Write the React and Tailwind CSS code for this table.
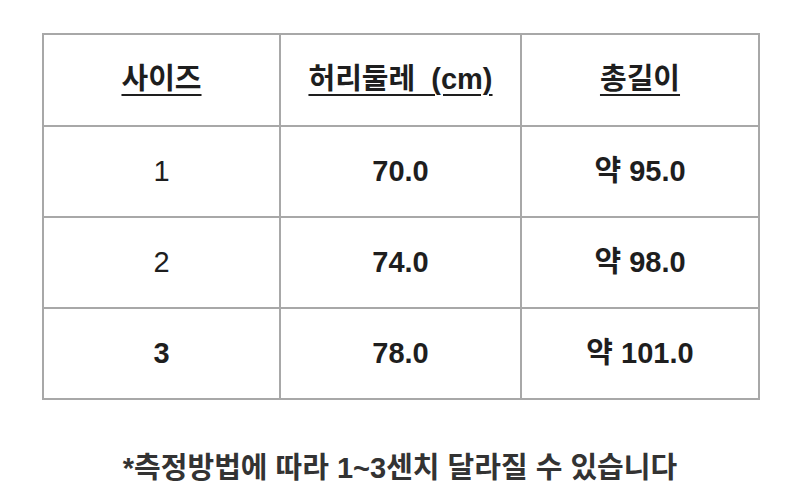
import React from 'react'

const rows = [
  { size: '1', waist: '70.0', length: '약 95.0', bold: false },
  { size: '2', waist: '74.0', length: '약 98.0', bold: false },
  { size: '3', waist: '78.0', length: '약 101.0', bold: true },
]

const font = { fontFamily: '"Liberation Sans", "Noto Sans CJK KR", sans-serif' }

const App = () => {
  return (
    <div className="w-[800px] h-[501px] bg-white text-[#1e1e1e] overflow-hidden" style={font}>
      <div className="pt-[33px] pl-[42px]">
        <table className="table-fixed border-collapse w-[716px] text-[29px] text-center">
          <colgroup>
            <col className="w-[237px]" />
            <col className="w-[241px]" />
            <col className="w-[238px]" />
          </colgroup>
          <thead>
            <tr className="h-[92px]">
              <th className="border-2 border-[#a8a8a8] font-semibold">
                <span className="underline underline-offset-[5px] decoration-[1.5px]">사이즈</span>
              </th>
              <th className="border-2 border-[#a8a8a8] font-semibold">
                <span className="underline underline-offset-[5px] decoration-[1.5px] whitespace-pre">허리둘레  (cm)</span>
              </th>
              <th className="border-2 border-[#a8a8a8] font-semibold">
                <span className="underline underline-offset-[5px] decoration-[1.5px]">총길이</span>
              </th>
            </tr>
          </thead>
          <tbody>
            {rows.map((r) => (
              <tr key={r.size} className="h-[91px]">
                <td className={`border-2 border-[#a8a8a8] ${r.bold ? 'font-bold' : 'font-normal'}`}>{r.size}</td>
                <td className="border-2 border-[#a8a8a8] font-bold">{r.waist}</td>
                <td className="border-2 border-[#a8a8a8] font-bold">{r.length}</td>
              </tr>
            ))}
          </tbody>
        </table>
      </div>
      <p className="mt-[47px] text-center text-[29px] font-bold text-[#333]">
        *측정방법에 따라 1~3센치 달라질 수 있습니다
      </p>
    </div>
  )
}

export default App
